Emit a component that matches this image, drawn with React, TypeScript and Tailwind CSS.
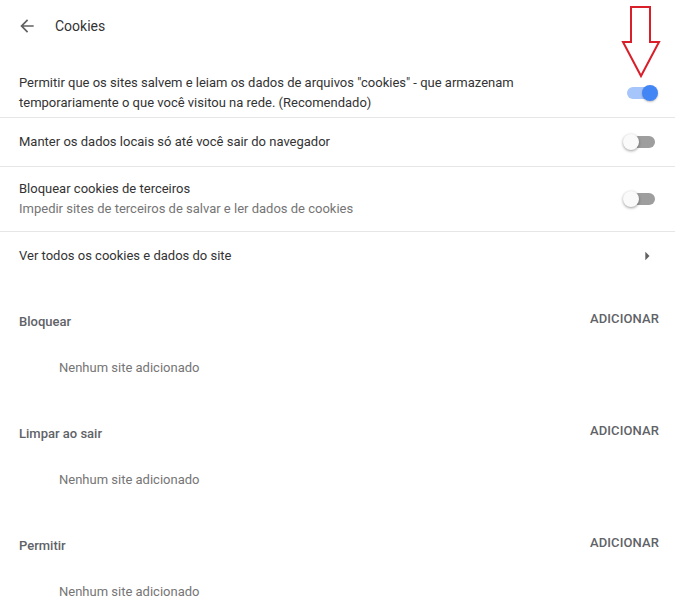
import React from "react";

function Toggle({ on }: { on: boolean }) {
  return (
    <div className="relative w-[36px] h-[16px] shrink-0">
      <div
        className={
          "absolute left-[4px] top-[2px] w-[28px] h-[12px] rounded-full " +
          (on ? "bg-[#a6c5fa]" : "bg-[#9e9e9e]")
        }
      />
      <div
        className={
          "absolute top-0 w-[16px] h-[16px] rounded-full " +
          (on
            ? "left-[19px] bg-[#4285f4] shadow-[0_1px_2px_rgba(0,0,0,0.25)]"
            : "left-0 bg-[#fafafa] shadow-[0_1px_3px_rgba(0,0,0,0.4)]")
        }
      />
    </div>
  );
}

function Section({ title }: { title: string }) {
  return (
    <div className="mb-[20px]">
      <div className="flex items-center justify-between h-[48px] pl-[19px] pr-[16px]">
        <span className="font-medium text-[#5f6368]">{title}</span>
        <span className="font-medium text-[#5f6368] mb-[7px] tracking-[0.1px]">ADICIONAR</span>
      </div>
      <div className="flex items-center h-[44px] pl-[59px] text-[#757575]">Nenhum site adicionado</div>
    </div>
  );
}

export default function App() {
  return (
    <div
      className="relative w-[675px] h-[601px] bg-white overflow-hidden text-[13px] leading-[20px] text-[#333]"
      style={{ fontFamily: "Roboto, 'Liberation Sans', sans-serif" }}
    >
      <div className="flex items-center h-[52px]">
        <svg className="ml-[17px]" width="20" height="20" viewBox="0 0 24 24" fill="#616161">
          <path d="M20 11H7.83l5.59-5.59L12 4l-8 8 8 8 1.41-1.41L7.83 13H20v-2z" />
        </svg>
        <span className="ml-[18px] text-[14px] text-[#333]">Cookies</span>
      </div>
      <div className="pt-[17px]">
        <div className="flex items-center justify-between py-[4px] pl-[19px] pr-[16px] border-b border-[#e6e6e6]">
          <div>
            <div>Permitir que os sites salvem e leiam os dados de arquivos "cookies" - que armazenam</div>
            <div>temporariamente o que você visitou na rede. (Recomendado)</div>
          </div>
          <Toggle on />
        </div>
        <div className="flex items-center justify-between h-[49px] pl-[19px] pr-[16px] border-b border-[#e6e6e6]">
          <div>Manter os dados locais só até você sair do navegador</div>
          <Toggle on={false} />
        </div>
        <div className="flex items-center justify-between h-[65px] pl-[19px] pr-[16px] border-b border-[#e6e6e6]">
          <div>
            <div>Bloquear cookies de terceiros</div>
            <div className="text-[#757575]">Impedir sites de terceiros de salvar e ler dados de cookies</div>
          </div>
          <Toggle on={false} />
        </div>
        <div className="flex items-center justify-between h-[48px] pl-[19px] pr-[18px]">
          <div>Ver todos os cookies e dados do site</div>
          <svg width="20" height="20" viewBox="0 0 24 24" fill="#616161">
            <path d="M10 17l5-5-5-5v10z" />
          </svg>
        </div>
      </div>
      <div className="pt-[18px]">
        <Section title="Bloquear" />
        <Section title="Limpar ao sair" />
        <Section title="Permitir" />
      </div>
      <svg className="absolute left-[616px] top-0" width="50" height="84" viewBox="616 0 50 84">
        <polygon
          points="631,7 650,7 650,42 659,42 641,76 623,42 631,42"
          fill="white"
          stroke="#d9202a"
          strokeWidth="2"
          strokeLinejoin="miter"
        />
      </svg>
    </div>
  );
}
